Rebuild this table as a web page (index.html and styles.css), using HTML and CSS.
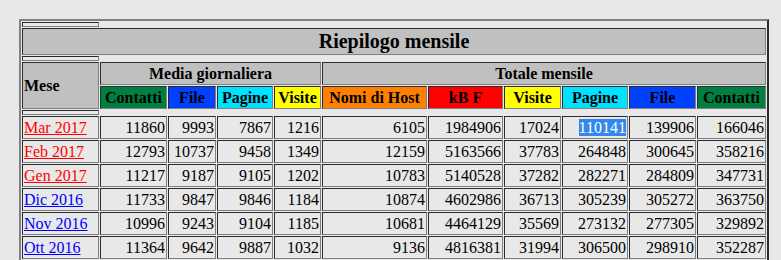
FILE: index.html
```html
<!DOCTYPE html>
<html lang="it">
<head>
<meta charset="utf-8">
<title>Riepilogo mensile</title>
<link rel="stylesheet" href="styles.css">
</head>
<body>
<table class="summary">
  <colgroup>
    <col class="w-month">
    <col class="w-avg-hits">
    <col class="w-avg-files">
    <col class="w-avg-pages">
    <col class="w-avg-visits">
    <col class="w-hosts">
    <col class="w-kb">
    <col class="w-visits">
    <col class="w-pages">
    <col class="w-files">
    <col class="w-hits">
  </colgroup>
  <tbody>
    <tr><td class="spacer"><div class="spacer-fill"></div></td></tr>
    <tr><th colspan="11" class="title">Riepilogo mensile</th></tr>
    <tr><td class="spacer"><div class="spacer-fill"></div></td></tr>
    <tr>
      <th rowspan="2" class="month-head">Mese</th>
      <th colspan="4" class="group">Media giornaliera</th>
      <th colspan="6" class="group">Totale mensile</th>
    </tr>
    <tr>
      <th class="hits">Contatti</th>
      <th class="files">File</th>
      <th class="pages">Pagine</th>
      <th class="visits">Visite</th>
      <th class="hosts">Nomi di Host</th>
      <th class="kbytes">kB F</th>
      <th class="visits">Visite</th>
      <th class="pages">Pagine</th>
      <th class="files">File</th>
      <th class="hits">Contatti</th>
    </tr>
    <tr><td class="spacer"><div class="spacer-fill"></div></td></tr>
    <tr>
      <td class="month"><a class="visited" href="#mar2017">Mar 2017</a></td>
      <td>11860</td><td>9993</td><td>7867</td><td>1216</td>
      <td>6105</td><td>1984906</td><td>17024</td><td><span class="selected">110141</span></td><td>139906</td><td>166046</td>
    </tr>
    <tr>
      <td class="month"><a class="visited" href="#feb2017">Feb 2017</a></td>
      <td>12793</td><td>10737</td><td>9458</td><td>1349</td>
      <td>12159</td><td>5163566</td><td>37783</td><td>264848</td><td>300645</td><td>358216</td>
    </tr>
    <tr>
      <td class="month"><a class="visited" href="#gen2017">Gen 2017</a></td>
      <td>11217</td><td>9187</td><td>9105</td><td>1202</td>
      <td>10783</td><td>5140528</td><td>37282</td><td>282271</td><td>284809</td><td>347731</td>
    </tr>
    <tr>
      <td class="month"><a href="#dic2016">Dic 2016</a></td>
      <td>11733</td><td>9847</td><td>9846</td><td>1184</td>
      <td>10874</td><td>4602986</td><td>36713</td><td>305239</td><td>305272</td><td>363750</td>
    </tr>
    <tr>
      <td class="month"><a href="#nov2016">Nov 2016</a></td>
      <td>10996</td><td>9243</td><td>9104</td><td>1185</td>
      <td>10681</td><td>4464129</td><td>35569</td><td>273132</td><td>277305</td><td>329892</td>
    </tr>
    <tr>
      <td class="month"><a href="#ott2016">Ott 2016</a></td>
      <td>11364</td><td>9642</td><td>9887</td><td>1032</td>
      <td>9136</td><td>4816381</td><td>31994</td><td>306500</td><td>298910</td><td>352287</td>
    </tr>
  </tbody>
</table>
</body>
</html>
```

FILE: styles.css
```css
html {
  background: #e8e8e8;
}

body {
  margin: 0;
  padding: 19px 0 0 19px;
  background: #e8e8e8;
  color: #000;
  font-family: "Liberation Serif", "Times New Roman", serif;
  font-size: 16px;
}

.summary {
  width: 750px;
  table-layout: fixed;
  border-collapse: separate;
  border-spacing: 1px;
  border: 2px solid;
  border-color: #808080 #2c2c2c #2c2c2c #808080;
}

.w-month { width: 77px; }
.w-avg-hits { width: 67px; }
.w-avg-files { width: 48px; }
.w-avg-pages { width: 56px; }
.w-avg-visits { width: 47px; }
.w-hosts { width: 105px; }
.w-kb { width: 75px; }
.w-visits { width: 57px; }
.w-pages { width: 66px; }
.w-files { width: 67px; }
.w-hits { width: 69px; }

.summary td,
.summary th {
  border: 1px solid;
  border-color: #2c2c2c #808080 #808080 #2c2c2c;
  padding: 1px;
  line-height: 19px;
  white-space: nowrap;
  overflow: hidden;
}

.summary th {
  font-weight: bold;
  text-align: center;
  vertical-align: middle;
}

.summary td {
  text-align: right;
  vertical-align: middle;
}

.summary td.spacer {
  padding: 0;
  line-height: 0;
}

.spacer-fill {
  height: 3px;
}

.summary .title {
  background: #c0c0c0;
  font-size: 20px;
  line-height: 23px;
}

.summary .month-head {
  background: #c0c0c0;
  text-align: left;
}

.summary .group {
  background: #c0c0c0;
}

.hits { background: #008040; }
.files { background: #0040ff; }
.pages { background: #00e0ff; }
.visits { background: #ffff00; }
.hosts { background: #ff8000; }
.kbytes { background: #ff0000; }

.summary td.month {
  text-align: left;
}

.month a {
  color: #0000ff;
  text-decoration: underline;
}

.month a.visited {
  color: #ff0000;
}

.selected {
  background: #3388ee;
  color: #fff;
}
```
